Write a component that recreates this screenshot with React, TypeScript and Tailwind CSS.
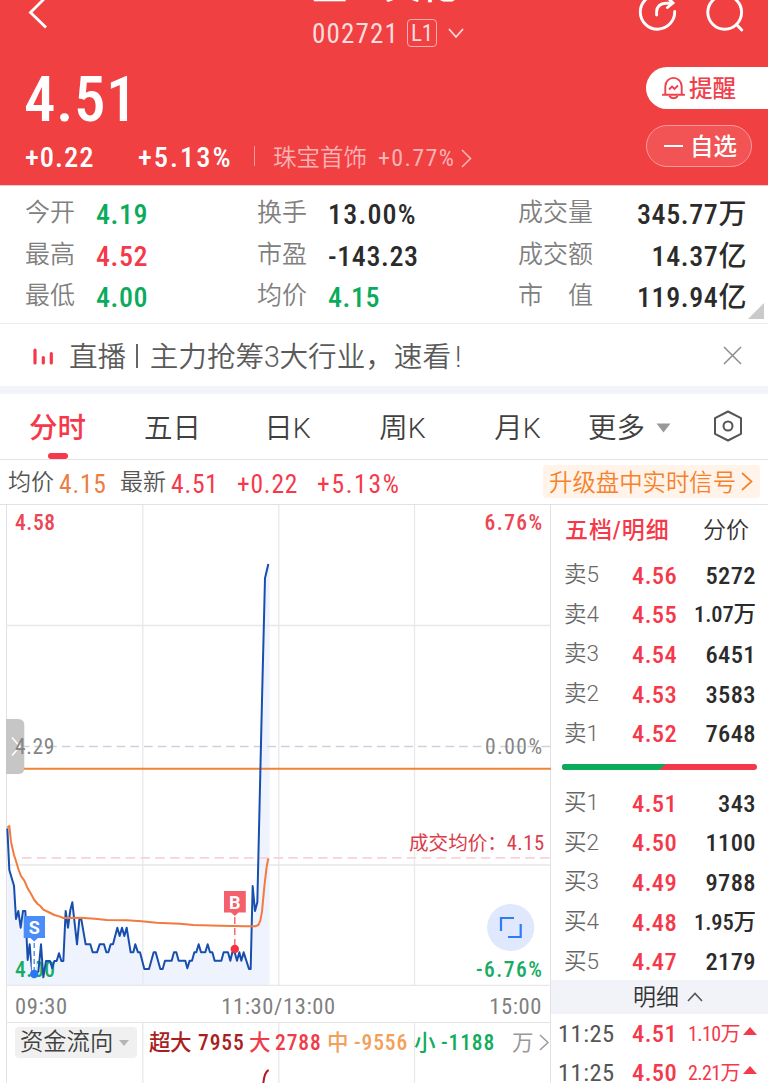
import clsx from "clsx";

type Stat = { label: string; value: string; color?: string };
type Level = { label: string; price: string; volume: string };

const STATS: Stat[][] = [
    [
        { label: "今开", value: "4.19", color: "text-[#0bab5c]" },
        { label: "最高", value: "4.52", color: "text-[#f5394a]" },
        { label: "最低", value: "4.00", color: "text-[#0bab5c]" },
    ],
    [
        { label: "换手", value: "13.00%" },
        { label: "市盈", value: "-143.23" },
        { label: "均价", value: "4.15", color: "text-[#0bab5c]" },
    ],
    [
        { label: "成交量", value: "345.77万" },
        { label: "成交额", value: "14.37亿" },
        { label: "市值", value: "119.94亿" },
    ],
];

const TABS = ["分时", "五日", "日K", "周K", "月K"];

const SELL: Level[] = [
    { label: "卖5", price: "4.56", volume: "5272" },
    { label: "卖4", price: "4.55", volume: "1.07万" },
    { label: "卖3", price: "4.54", volume: "6451" },
    { label: "卖2", price: "4.53", volume: "3583" },
    { label: "卖1", price: "4.52", volume: "7648" },
];

const BUY: Level[] = [
    { label: "买1", price: "4.51", volume: "343" },
    { label: "买2", price: "4.50", volume: "1100" },
    { label: "买3", price: "4.49", volume: "9788" },
    { label: "买4", price: "4.48", volume: "1.95万" },
    { label: "买5", price: "4.47", volume: "2179" },
];

const TRADES = [
    { time: "11:25", price: "4.51", volume: "1.10万" },
    { time: "11:25", price: "4.50", volume: "2.21万" },
];

// Both series are in thirds of a pixel
const PRICE_LINE =
    "22,385 28,510 42,557 48,657 55,633 62,683 69,633 76,633 83,780 89,733 96,810 102,822 115,815 123,733 130,832 138,783 150,783 157,805 163,783 170,783 177,760 184,783 190,783 197,633 204,683 211,630 217,607 231,733 238,658 244,658 257,733 271,733 278,757 291,757 299,733 312,733 319,757 325,757 332,733 339,733 352,683 359,708 366,683 373,708 380,683 392,757 400,757 406,733 414,757 420,757 433,807 447,807 461,757 467,757 481,807 488,807 495,782 515,782 522,757 529,757 536,782 556,782 562,805 569,782 576,782 583,757 589,757 596,733 603,757 616,757 623,733 630,757 637,757 644,782 664,782 671,757 684,757 691,782 697,757 704,757 711,782 718,757 724,782 731,757 747,807 752,807 758,558 765,633 772,607 786,0 795,-365 805,-408";
const AVG_LINE =
    "22,382 28,378 33,425 42,465 48,483 55,507 63,528 73,542 82,563 92,580 103,600 113,612 121,618 130,629 145,636 163,645 180,650 190,654 215,654 240,653 285,656 320,660 380,661 425,664 470,668 540,671 580,675 660,677 735,679 765,679 775,675 781,662 786,635 793,560 800,500 805,475";

function Header() {
    return (
        <header className="h-[185px] bg-[#f04042] text-white flex flex-col">
            <div className="h-[50px] flex justify-between overflow-hidden">
                <svg className="w-[140px] h-[50px]" viewBox="0 0 140 50" fill="none" stroke="currentColor" strokeWidth="2.8">
                    <path d="M46 -3 30.5 12.5 46 27.5" />
                </svg>
                <div className="flex flex-col items-center w-[200px] ml-[5px]">
                    <div className="h-[18px] flex flex-col justify-end">
                        <h1 className="text-[36.5px] font-medium leading-[30px] whitespace-nowrap -mt-[60px] mb-[13px] -ml-[4px]">金一文化</h1>
                    </div>
                    <div className="mt-px ml-[3px] flex items-center h-[34px] text-[#fcdcdc]">
                        <span className="pt-[2px] text-[27px] tracking-[1.2px] leading-[34px]">002721</span>
                        <span className="ml-[8px] w-[30px] h-[28px] rounded-[4px] border border-[#f7b0b0] text-[23px] leading-[27px] text-center">
                            L1
                        </span>
                        <svg className="ml-[11px] w-4 h-3" viewBox="0 0 16 12" fill="none" stroke="currentColor" strokeWidth="1.8">
                            <path d="M1 2 8 10 15 2" />
                        </svg>
                    </div>
                </div>
                <svg className="w-[140px] h-[50px]" viewBox="628 0 140 50" fill="none" stroke="currentColor" strokeWidth="2.9" strokeLinecap="round">
                    <path d="M674.7 11.5A17.2 17.2 0 1 1 657.5 -5.2" />
                    <path d="M656.6 15V12Q657 3.5 666 3.3H672.5M667.5 -2.5 673 3 667.5 7.5" />
                    <circle cx="724.7" cy="12.3" r="16.9" />
                    <path d="M736.5 24.5 741.8 30" />
                </svg>
            </div>
            <div className="flex-1 flex justify-between">
                <div className="pl-[25px]">
                    <p className="mt-[18px] h-[64px] text-[63px] leading-[64px] font-medium tracking-[0.5px] -ml-px">4.51</p>
                    <div className="mt-[10px] flex items-center h-[32px] leading-[32px]">
                        <span className="w-[113px] text-[28.5px] font-medium tracking-[1px]">+0.22</span>
                        <span className="w-[116px] text-[28.5px] font-medium tracking-[2px]">+5.13%</span>
                        <span className="w-px h-5 bg-[#f69a9b] -mt-1" />
                        <span className="ml-[18px] w-[105px] text-[23.5px] font-[350] text-[#fab3b4]">珠宝首饰</span>
                        <span className="text-[24px] text-[#fab3b4] tracking-[1.4px]">+0.77%</span>
                        <svg className="ml-[6px] w-[11px] h-[19px]" viewBox="0 0 11 19" fill="none" stroke="#fab3b4" strokeWidth="1.6">
                            <path d="M1 1 9.5 9.5 1 18" />
                        </svg>
                    </div>
                </div>
                <div className="w-[122px] pt-[17px] text-[23.5px] font-medium">
                    <button className="w-full h-[42px] rounded-l-full bg-white text-[#f0404c] flex items-center pl-4">
                        <svg className="w-[23px] h-[24px] mr-[4px]" viewBox="0 0 23 24" fill="none" stroke="currentColor" strokeWidth="1.9">
                            <path d="M3.3 18.4V10.5A8.2 8.6 0 0 1 19.7 10.5V18.4M.8 18.8H22.2" strokeLinecap="round" />
                            <path d="M7.2 20Q11.5 24.5 15.8 20" />
                            <path d="M7 13.5 10 10.5 12.5 13 16 9.5" />
                        </svg>
                        <span className="pt-[3px]">提醒</span>
                    </button>
                    <button className="mt-4 w-[106px] h-[42px] rounded-full border border-[#f79a9b] bg-white/10 flex items-center pl-[17px]">
                        <span className="w-[19px] h-[2px] bg-white mr-[7px]" />
                        <span className="pt-[3px]">自选</span>
                    </button>
                </div>
            </div>
        </header>
    );
}

function Stats() {
    return (
        <section className="relative h-[139px] border-t border-[#fbc6c8] border-b border-b-[#ebebed] pt-[8px] pl-[25px] pr-[21px] grid grid-cols-[232px_261px_1fr]">
            {STATS.map((col, i) => (
                <div key={i}>
                    {col.map((s) => (
                        <div key={s.label} className="h-[41.5px] flex items-center leading-[41px]">
                            <span
                                className={clsx(
                                    "text-[25px] font-[350] text-[#808080] -mt-1 whitespace-nowrap",
                                    i === 2 ? "w-[75px] flex justify-between" : "w-[71px]"
                                )}
                            >
                                {s.label === "市值" ? (
                                    <>
                                        <span>市</span>
                                        <span>值</span>
                                    </>
                                ) : (
                                    s.label
                                )}
                            </span>
                            <span
                                className={clsx(
                                    "text-[28px] font-medium",
                                    s.color ?? "text-[#2b2b2b]",
                                    i === 2 && "flex-1 text-right",
                                    s.value.includes("%") ? "tracking-[1.2px]" : "tracking-[0.6px]"
                                )}
                            >
                                {s.value}
                            </span>
                        </div>
                    ))}
                </div>
            ))}
            <svg className="absolute right-1 bottom-1 w-4 h-4" viewBox="0 0 16 16">
                <path d="M16 0V16H0Z" fill="#cacaca" />
            </svg>
        </section>
    );
}

function Notice() {
    return (
        <section className="h-[70px] border-b-8 border-[#f3f4f9] flex items-center pl-[33px] pr-[26px] font-stretch-normal">
            <svg className="w-[21px] h-[17px] mt-[3px]" viewBox="0 0 21 17" stroke="#f5394a" strokeWidth="3.2" strokeLinecap="round">
                <path d="M2 2V15M10.3 9.5V15M18.3 5.5V15" />
            </svg>
            <p className="ml-[15px] text-[28.6px] leading-[40px] font-[350] text-[#5a5a5a] whitespace-nowrap mt-[3px]">
                <span>直播</span>
                <span className="ml-[10px] mr-[12px] inline-block w-[1.5px] h-[24px] bg-[#666] align-[-1px]" />
                <span>主力抢筹</span>
                <span className="tracking-[-0.5px]">3</span>
                <span>大行业，速看</span>
                <span className="ml-[4px]">!</span>
            </p>
            <svg className="ml-auto w-[19px] h-[19px]" viewBox="0 0 19 19" stroke="#8c8c8c" strokeWidth="1.5">
                <path d="M1 1 18 18M18 1 1 18" />
            </svg>
        </section>
    );
}

function Tabs() {
    return (
        <nav className="h-[66px] border-b border-[#e4e4e6] flex text-[28.5px] leading-[69px] text-[#404040] font-stretch-normal">
            {TABS.map((tab, i) => (
                <div
                    key={tab}
                    className={clsx("w-[115px] h-[65px] text-center", i === 0 ? "relative font-medium text-[#f5394a]" : "font-[350]")}
                >
                    {tab}
                    {i === 0 && <span className="absolute left-12 bottom-0 w-5 h-[6px] rounded-[3px] bg-[#f5394a]" />}
                </div>
            ))}
            <div className="pl-[13px] font-[350]">更多</div>
            <svg className="ml-[11px] mt-[29px] w-[15px] h-[10px]" viewBox="0 0 15 10">
                <path d="M.5 .5H14.5L7.5 9.5Z" fill="#999" />
            </svg>
            <svg className="ml-[42px] mt-[16px] w-[30px] h-[32px]" viewBox="0 0 30 32" fill="none" stroke="#555" strokeWidth="2" strokeLinejoin="round">
                <path d="M15 1.5 28 8.2V23.8L15 30.5 2 23.8V8.2Z" />
                <circle cx="15" cy="16" r="4.5" />
            </svg>
        </nav>
    );
}

function PriceBar() {
    return (
        <div className="h-[45px] border-b border-[#e2e2e4] flex items-center pl-[8px] pr-2 text-[25.5px] leading-[44px] text-[#f5394a] tracking-[0.8px] whitespace-nowrap">
            <span className="pt-[2px] w-[51px] text-[23px] font-[350] text-[#555] tracking-normal">均价</span>
            <span className="pt-[3px] w-[61px] text-[#ea7f45]">4.15</span>
            <span className="pt-[2px] w-[51px] text-[23px] font-[350] text-[#555] tracking-normal">最新</span>
            <span className="pt-[3px] w-[66px]">4.51</span>
            <span className="pt-[3px] w-[80px]">+0.22</span>
            <span className="pt-[3px] tracking-[1.7px]">+5.13%</span>
            <a className="ml-auto -mt-px w-[217px] h-[33px] rounded-[3px] bg-[#fff3ea] flex items-center pl-[6px] text-[23.4px] tracking-normal text-[#f5822a]">
                <span className="pt-[3px] leading-[33px] font-[350]">升级盘中实时信号</span>
                <svg className="ml-[5px] w-3 h-[19px]" viewBox="0 0 12 19" fill="none" stroke="currentColor" strokeWidth="1.7">
                    <path d="M1 1 10.5 9.5 1 18" />
                </svg>
            </a>
        </div>
    );
}

function Chart() {
    return (
        <svg className="block w-[545px] h-[481px]" viewBox="6 505 545 481" fontSize="21.5" letterSpacing=".6">
            <g transform="translate(0 700) scale(.33333)">
                <polygon points={`22,855 ${PRICE_LINE} 809,-408 809,855`} fill="#eef3fe" />
            </g>
            <path d="M142.8 505V986M278.8 505V986M414.5 505V986M6 625.5H551M6 865H551M6 985.5H551" stroke="#e8e8ea" strokeWidth="1.3" />
            <path d="M7 746.5H551" stroke="#c9d3dd" strokeWidth="1.3" strokeDasharray="8.7 5" />
            <path d="M22 857.8H551" stroke="#f8d3d6" strokeWidth="1.7" strokeDasharray="9.5 5.3" />
            <path d="M6 768.7H551" stroke="#f28336" strokeWidth="1.9" />

            {/* side drawer handle */}
            <path d="M6 719H18Q24.3 719 24.3 725V768Q24.3 774 18 774H6Z" fill="#c6c6c6" />
            <path d="M12 737.5 20 746.5 12 755.5" fill="none" stroke="#fff" strokeWidth="1.5" />

            <text x="15" y="754" fill="#858585">4.29</text>
            <text x="543.5" y="754" textAnchor="end" fill="#858585" letterSpacing="1.5">0.00%</text>
            <g fontWeight="500">
                <text x="15" y="530" fill="#ec4553">4.58</text>
                <text x="543.5" y="530" textAnchor="end" fill="#ec4553" letterSpacing="1.4">6.76%</text>
                <text x="15" y="977" fill="#17ac62">4.00</text>
                <text x="543.5" y="977" textAnchor="end" fill="#17ac62" letterSpacing="1.5">-6.76%</text>
            </g>
            <text x="409" y="850" fontSize="19.6" fill="#dc3c48" letterSpacing="0">成交均价：</text>
            <text x="544.8" y="850" fontSize="20.5" textAnchor="end" fill="#dc3c48">4.15</text>

            <g transform="translate(0 700) scale(.33333)" fill="none" strokeLinejoin="round">
                <polyline points={PRICE_LINE} stroke="#184fae" strokeWidth="6" />
                <polyline points={AVG_LINE} stroke="#f27a3e" strokeWidth="6" />
            </g>

            {/* sell / buy markers */}
            <path d="M34.2 942V972" stroke="#fff" strokeWidth="5" />
            <path d="M34.2 943V972" stroke="#4b8df8" strokeWidth="1.4" strokeDasharray="5 3" />
            <path d="M23.7 916H45V938H38L34.2 941.5 30.5 938H23.7Z" fill="#4b8df8" />
            <circle cx="34.2" cy="974" r="4.2" fill="#2878f5" />
            <path d="M234.8 917V948" stroke="#f4606c" strokeWidth="1.4" strokeDasharray="7 4" />
            <path d="M224 891H245.8V912.5H238.5L234.8 916 231 912.5H224Z" fill="#f4606c" />
            <circle cx="234.8" cy="949" r="4.2" fill="#f5333f" />
            <g className="font-stretch-normal" fill="#fff" fontSize="18" fontWeight="700" textAnchor="middle" letterSpacing="0">
                <text x="34.3" y="933.5">S</text>
                <text x="234.8" y="908.5">B</text>
            </g>

            {/* fullscreen button */}
            <circle cx="510.7" cy="927.5" r="23.6" fill="#dfe8fd" />
            <path d="M501 931V918H514M508 937H520.7V924" fill="none" stroke="#2f7df6" strokeWidth="2.2" />
        </svg>
    );
}

function FundFlow() {
    return (
        <div className="relative flex-1 border-t border-[#e4e4e6]">
            <svg className="absolute inset-0 w-[545px] h-[60px]" viewBox="6 1023 545 60" fill="none">
                <path d="M142.8 1023V1083M278.8 1023V1083M414.5 1023V1083" stroke="#e8e8ea" strokeWidth="1.3" />
                <path d="M263.3 1083Q264.5 1072 268.6 1070" stroke="#b01c22" strokeWidth="2" />
            </svg>
            <div className="relative mt-[3px] flex items-center h-[32px] text-[21.5px] leading-[33px] tracking-[0.9px] font-medium whitespace-nowrap">
                <div className="ml-[9px] w-[122px] h-[31px] rounded-[4px] bg-[#f0f0f0] flex items-center pl-[5px] text-[23.3px] font-[350] tracking-normal text-[#404040]">
                    资金流向
                    <svg className="ml-[6px] mt-px w-[10px] h-[6px]" viewBox="0 0 10 6">
                        <path d="M0 0H10L5 6Z" fill="#b5b5b5" />
                    </svg>
                </div>
                <span className="ml-[12px] w-[49px] text-[#a81e22] tracking-[-0.5px]">超大</span>
                <span className="w-[51px] text-[#a81e22]">7955</span>
                <span className="w-[26px] text-[#f03c4a]">大</span>
                <span className="w-[52px] text-[#f03c4a]">2788</span>
                <span className="w-[27px] text-[#f2a05a]">中</span>
                <span className="w-[60px] text-[#f2a05a]">-9556</span>
                <span className="w-[27px] text-[#13ab5e]">小</span>
                <span className="w-[71px] text-[#13ab5e]">-1188</span>
                <span className="font-normal text-[#999] tracking-normal">万</span>
                <svg className="ml-[5px] w-[10px] h-[17px]" viewBox="0 0 10 17" fill="none" stroke="#999" strokeWidth="1.5">
                    <path d="M1 1 9 8.5 1 16" />
                </svg>
            </div>
        </div>
    );
}

function Levels({ rows }: { rows: Level[] }) {
    return (
        <>
            {rows.map((r) => (
                <div key={r.label} className="h-[39.6px] flex items-center pl-[13px] pr-[12px] leading-[39px]">
                    <span className="w-[68px] text-[22.5px] font-[350] text-[#686868] font-stretch-normal">{r.label}</span>
                    <span className="pt-px text-[24.5px] font-medium tracking-[0.4px] text-[#f5394a]">{r.price}</span>
                    <span
                        className={clsx(
                            "pt-px ml-auto font-medium text-[#2b2b2b]",
                            r.volume.includes("万") ? "text-[22.5px] tracking-[-0.1px]" : "text-[24.5px] tracking-[0.4px]"
                        )}
                    >
                        {r.volume}
                    </span>
                </div>
            ))}
        </>
    );
}

function OrderBook() {
    return (
        <aside className="w-[217px] whitespace-nowrap">
            <div className="h-[50px] flex pl-[14px] leading-[51px] text-[23px]">
                <span className="w-[138px] font-medium text-[#f5394a] tracking-[0.9px]">五档/明细</span>
                <span className="font-[350] text-[#333]">分价</span>
            </div>
            <Levels rows={SELL} />
            <svg className="mt-[11px] ml-[11px] w-[195px] h-[6px] block" viewBox="0 0 195 6">
                <rect width="195" height="6" rx="3" fill="#f5394a" />
                <path d="M3 0H104L97 6H3A3 3 0 0 1 3 0Z" fill="#0bab5c" />
            </svg>
            <div className="mt-[13px]">
                <Levels rows={BUY} />
            </div>
            <div className="-mt-px h-[34px] bg-[#f2f3f8] flex items-center pl-[82px] text-[23px] leading-[34px] font-[350] text-[#333]">
                <span className="pt-[2px]">明细</span>
                <svg className="ml-[8px] w-4 h-[10px]" viewBox="0 0 16 10" fill="none" stroke="#555" strokeWidth="1.6">
                    <path d="M1 9 8 1.5 15 9" />
                </svg>
            </div>
            {TRADES.map((t) => (
                <div key={t.price} className="h-[39.5px] flex items-center pl-[7px] pr-[11px] leading-[42px]">
                    <span className="w-[74px] text-[24.5px] text-[#555] tracking-[0.5px]">{t.time}</span>
                    <span className="text-[24.5px] font-medium tracking-[0.4px] text-[#f5394a]">{t.price}</span>
                    <span className="ml-auto text-[20px] tracking-[-0.6px] text-[#f5394a]">{t.volume}</span>
                    <svg className="ml-[3px] -mt-[6px] w-[14px] h-2" viewBox="0 0 14 8">
                        <path d="M7 0 14 8H0Z" fill="#f5394a" />
                    </svg>
                </div>
            ))}
        </aside>
    );
}

export default function App() {
    return (
        <div className="w-[768px] h-[1083px] overflow-hidden flex flex-col bg-white font-[Roboto,'Noto_Sans_CJK_SC',sans-serif] font-stretch-condensed">
            <Header />
            <Stats />
            <Notice />
            <Tabs />
            <PriceBar />
            <main className="flex-1 min-h-0 flex">
                <section className="ml-[6px] w-[545px] shrink-0 flex flex-col shadow-[inset_1px_0_#e2e2e4,inset_-1px_0_#e2e2e4]">
                    <Chart />
                    <div className="h-[36px] flex justify-between items-center px-[9px] text-[22.5px] leading-[36px] tracking-[0.6px] text-[#808080]">
                        <span className="pt-[3px]">09:30</span>
                        <span className="pt-[3px]">11:30/13:00</span>
                        <span className="pt-[3px]">15:00</span>
                    </div>
                    <FundFlow />
                </section>
                <OrderBook />
            </main>
        </div>
    );
}
